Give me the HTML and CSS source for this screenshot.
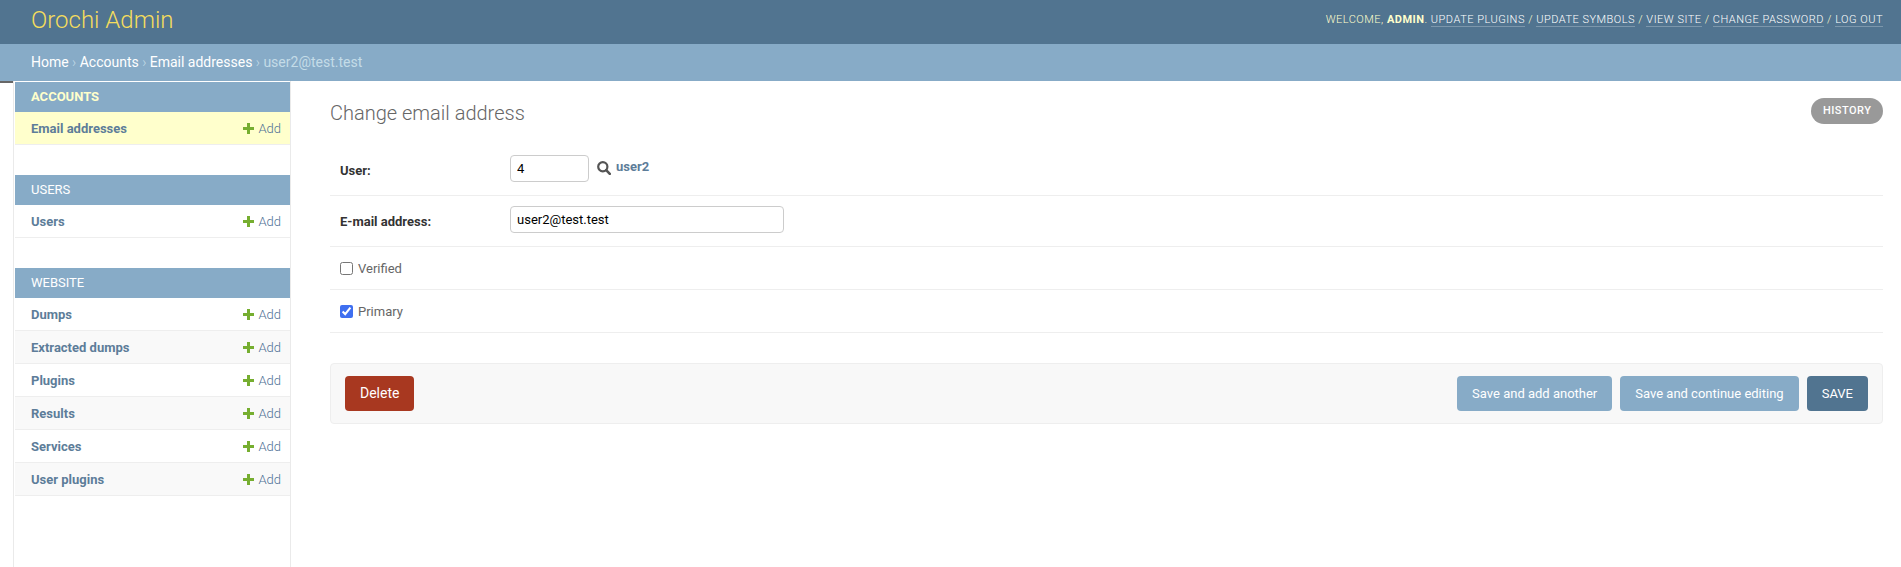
FILE: index.html
```html
<!DOCTYPE html>
<html lang="en">
<head>
<meta charset="utf-8">
<title>Change email address | Orochi Admin</title>
<link rel="stylesheet" href="styles.css">
</head>
<body>
<header class="header">
  <a class="brand" href="#">Orochi Admin</a>
  <div class="tools">
    Welcome, <strong>admin</strong>. <a href="#">Update plugins</a> / <a href="#">Update symbols</a> / <a href="#">View site</a> / <a href="#">Change password</a> / <a href="#">Log out</a>
  </div>
</header>
<nav class="crumbs"><a href="#">Home</a> › <a href="#">Accounts</a> › <a href="#">Email addresses</a> › <span class="crumb-current">user2@test.test</span></nav>
<div class="main">
  <div class="gutter"></div>
  <aside class="sidebar">
    <section class="module">
      <h2 class="caption current">Accounts</h2>
      <div class="row selected"><a class="name" href="#">Email addresses</a><a class="add" href="#"><svg class="plus" viewBox="0 0 11 11"><path d="M4 0h3v4h4v3H7v4H4V7H0V4h4z"/></svg>Add</a></div>
    </section>
    <section class="module">
      <h2 class="caption">Users</h2>
      <div class="row"><a class="name" href="#">Users</a><a class="add" href="#"><svg class="plus" viewBox="0 0 11 11"><path d="M4 0h3v4h4v3H7v4H4V7H0V4h4z"/></svg>Add</a></div>
    </section>
    <section class="module">
      <h2 class="caption">Website</h2>
      <div class="row"><a class="name" href="#">Dumps</a><a class="add" href="#"><svg class="plus" viewBox="0 0 11 11"><path d="M4 0h3v4h4v3H7v4H4V7H0V4h4z"/></svg>Add</a></div>
      <div class="row alt"><a class="name" href="#">Extracted dumps</a><a class="add" href="#"><svg class="plus" viewBox="0 0 11 11"><path d="M4 0h3v4h4v3H7v4H4V7H0V4h4z"/></svg>Add</a></div>
      <div class="row"><a class="name" href="#">Plugins</a><a class="add" href="#"><svg class="plus" viewBox="0 0 11 11"><path d="M4 0h3v4h4v3H7v4H4V7H0V4h4z"/></svg>Add</a></div>
      <div class="row alt"><a class="name" href="#">Results</a><a class="add" href="#"><svg class="plus" viewBox="0 0 11 11"><path d="M4 0h3v4h4v3H7v4H4V7H0V4h4z"/></svg>Add</a></div>
      <div class="row"><a class="name" href="#">Services</a><a class="add" href="#"><svg class="plus" viewBox="0 0 11 11"><path d="M4 0h3v4h4v3H7v4H4V7H0V4h4z"/></svg>Add</a></div>
      <div class="row alt"><a class="name" href="#">User plugins</a><a class="add" href="#"><svg class="plus" viewBox="0 0 11 11"><path d="M4 0h3v4h4v3H7v4H4V7H0V4h4z"/></svg>Add</a></div>
    </section>
  </aside>
  <main class="content">
    <div class="title-bar">
      <h1 class="title">Change email address</h1>
      <a class="history" href="#">History</a>
    </div>
    <form class="form">
      <div class="field field-input">
        <label class="label" for="u">User:</label>
        <input class="input input-short" id="u" type="text" value="4">
        <svg class="lookup" viewBox="0 0 14 14"><circle cx="5.8" cy="5.8" r="4.6" fill="none" stroke="#555" stroke-width="2.2"/><path d="M9.2 9.2l3.6 3.6" stroke="#555" stroke-width="2.6" stroke-linecap="round"/></svg>
        <a class="user-link" href="#">user2</a>
      </div>
      <div class="field field-input">
        <label class="label" for="e">E-mail address:</label>
        <input class="input input-long" id="e" type="text" value="user2@test.test">
      </div>
      <div class="field field-check">
        <input class="check" id="v" type="checkbox">
        <label class="check-label" for="v">Verified</label>
      </div>
      <div class="field field-check">
        <input class="check" id="p" type="checkbox" checked>
        <label class="check-label" for="p">Primary</label>
      </div>
      <div class="submit-row">
        <a class="btn btn-delete" href="#">Delete</a>
        <div class="submit-right">
          <a class="btn btn-soft" href="#">Save and add another</a>
          <a class="btn btn-soft" href="#">Save and continue editing</a>
          <a class="btn btn-save" href="#">SAVE</a>
        </div>
      </div>
    </form>
  </main>
</div>
</body>
</html>
```

FILE: styles.css
```css
* { box-sizing: border-box; }
html, body { margin: 0; height: 100%; overflow: hidden; background: #fff; }
body { font-family: Roboto, "Liberation Sans", sans-serif; font-size: 13px; color: #333; }
a { text-decoration: none; }

.header { height: 44px; background: #517490; display: flex; align-items: center; justify-content: space-between; padding: 0 18px 0 31px; }
.brand { font-size: 24px; font-weight: 300; color: #f5dd5d; position: relative; top: -2px; }
.tools { font-size: 11px; letter-spacing: 0.5px; text-transform: uppercase; font-weight: 300; color: #ffc; position: relative; top: -3px; }
.tools strong { font-weight: 700; }
.tools a { color: #fff; border-bottom: 1px solid rgba(255,255,255,0.25); }

.crumbs { height: 37px; background: #87abc7; padding: 0 31px; font-size: 14px; font-weight: 300; color: #c4dce8; line-height: 36px; }
.crumbs a { color: #fff; font-weight: 400; }
.crumb-current { font-weight: 400; }

.main { display: flex; height: 486px; }
.gutter { width: 13px; height: 2px; background: #666; flex: none; }
.sidebar { width: 278px; flex: none; border-left: 1px solid #eaeaea; border-right: 1px solid #eaeaea; padding: 1px 0 0 1px; }
.module { margin-bottom: 30px; }
.caption { margin: 0; height: 30px; line-height: 30px; padding: 0 16px; background: #87abc7; color: #fff; font-size: 13px; font-weight: 400; text-transform: uppercase; }
.caption.current { color: #ffc; font-weight: 700; }
.row { height: 33px; display: flex; align-items: center; justify-content: space-between; padding: 0 9px 0 16px; border-bottom: 1px solid #eee; }
.row.alt { background: #f9f9f9; }
.row.selected { background: #ffc; }
.name { color: #5d7d99; font-weight: 700; position: relative; top: 0.5px; }
.add { color: #4f7296; font-weight: 300; display: flex; align-items: center; gap: 4px; position: relative; top: 0.5px; }
.plus { width: 11px; height: 11px; fill: #76ae30; }

.content { flex: 1; padding: 17px 18px 0 39px; min-width: 0; }
.title-bar { display: flex; justify-content: space-between; align-items: flex-start; height: 47px; }
.title { margin: 0; font-size: 20px; font-weight: 300; color: #666; line-height: 30px; }
.history { height: 26px; padding: 0 11.5px; border-radius: 13px; background: #999; color: #fff; font-size: 11px; font-weight: 500; letter-spacing: 0.5px; line-height: 26px; text-transform: uppercase; }

.field { display: flex; padding: 0 10px; border-bottom: 1px solid #eee; }
.field-input { height: 51px; padding-top: 10px; align-items: flex-start; }
.field-check { height: 43px; align-items: center; }
.label { width: 170px; font-weight: 700; flex: none; line-height: 27px; position: relative; top: 2px; }
.input { height: 27px; padding: 0 6px; border: 1px solid #ccc; border-radius: 4px; font: 13px Roboto, sans-serif; color: #000; }
.input-short { width: 79px; }
.input-long { width: 274px; }
.lookup { width: 14px; height: 14px; margin: 6px 0 0 8px; }
.user-link { margin-left: 5px; font-weight: 700; color: #5d7d99; line-height: 24px; }
.check { width: 13px; height: 13px; margin: 0 5px 0 0; accent-color: #3f6ff0; }
.check-label { color: #666; }

.submit-row { margin-top: 30px; height: 61px; background: #f8f8f8; border: 1px solid #eee; border-radius: 4px; padding: 0 14px; display: flex; align-items: center; justify-content: space-between; }
.submit-right { display: flex; gap: 8px; }
.btn { height: 35px; line-height: 35px; padding: 0 15px; border-radius: 4px; color: #fff; font-size: 13px; display: block; }
.btn-delete { background: #a83820; font-size: 14px; }
.btn-soft { background: #87abc7; }
.btn-save { background: #517490; }
```
